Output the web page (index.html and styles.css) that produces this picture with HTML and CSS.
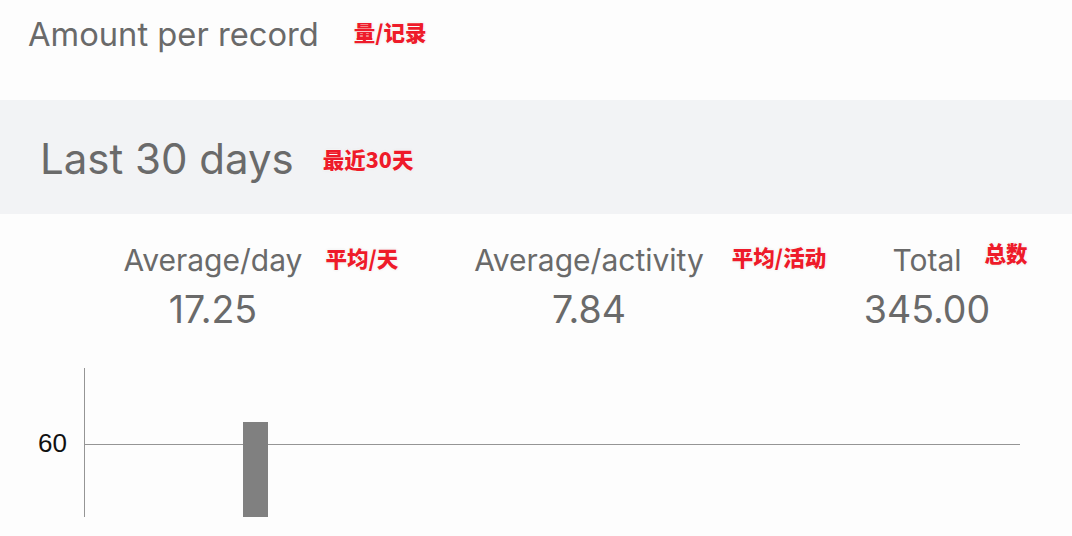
FILE: index.html
```html
<!DOCTYPE html>
<html lang="en">
<head>
<meta charset="utf-8">
<link rel="stylesheet" href="styles.css">
</head>
<body>
<div class="page">
  <section class="record-row">
    <span class="record-title">Amount per record</span>
    <span class="note note-record">量/记录</span>
  </section>

  <section class="period-band">
    <span class="period-title">Last 30 days</span>
    <span class="note note-period">最近30天</span>
  </section>

  <section class="stats">
    <div class="stat stat-day">
      <div class="stat-label"><span class="label-text">Average/day</span><span class="note note-stat">平均/天</span></div>
      <div class="stat-value">17.25</div>
    </div>
    <div class="stat stat-activity">
      <div class="stat-label"><span class="label-text">Average/activity</span><span class="note note-stat">平均/活动</span></div>
      <div class="stat-value">7.84</div>
    </div>
    <div class="stat stat-total">
      <div class="stat-label"><span class="label-text">Total</span><span class="note note-stat">总数</span></div>
      <div class="stat-value">345.00</div>
    </div>
  </section>

  <section class="chart">
    <div class="chart-area">
      <div class="y-axis"></div>
      <div class="gridline"></div>
      <div class="tick-label">60</div>
      <div class="bar" style="height: 95px;"></div>
    </div>
  </section>
</div>
</body>
</html>
```

FILE: styles.css
```css
* { box-sizing: border-box; }

html, body {
  margin: 0;
  padding: 0;
  background: #fdfdfd;
  overflow: hidden;
}

body {
  width: 1072px;
  height: 536px;
  font-family: "Inter", "Liberation Sans", sans-serif;
  color: #6a6a6a;
}

.page {
  display: flex;
  flex-direction: column;
}

.note {
  font-family: "Noto Sans CJK SC", sans-serif;
  font-weight: 900;
  font-size: 21.5px;
  line-height: 1;
  color: #ee1b2a;
  text-shadow: 0 0 2px #fff, 0 0 2px #fff, 0 0 3px #ddd;
  white-space: nowrap;
}

.record-row {
  height: 100px;
  padding: 14px 0 0 28px;
  display: flex;
  align-items: flex-start;
}

.record-title {
  font-size: 32.7px;
  line-height: 40px;
}

.note-record {
  margin: 7px 0 0 35px;
}

.period-band {
  height: 114px;
  background: #f2f3f5;
  padding: 4px 0 0 40px;
  display: flex;
  align-items: center;
}

.period-title {
  font-size: 42px;
  line-height: 50px;
}

.note-period {
  margin: 0 0 0 29px;
}

.stats {
  display: grid;
  grid-template-columns: 346px 406px 270px;
  padding: 28px 0 0 40px;
  height: 124px;
}

.stat {
  display: flex;
  flex-direction: column;
  align-items: center;
}

.stat-label {
  position: relative;
  font-size: 30px;
  line-height: 36px;
}

.note-stat {
  position: absolute;
  left: calc(100% + 23px);
  top: 5px;
}

.stat-activity .note-stat { left: calc(100% + 28px); top: 4px; }
.stat-total .note-stat { top: 0; }

.stat-value {
  margin-top: 10px;
  font-size: 37.5px;
  line-height: 44px;
}

.chart {
  padding: 0 52px 0 43px;
}

.chart-area {
  position: relative;
  height: 149px;
  margin-top: 30px;
}

.y-axis {
  position: absolute;
  left: 41px;
  top: 0;
  bottom: 0;
  width: 1px;
  background: #959595;
}

.gridline {
  position: absolute;
  left: 41px;
  right: 0;
  top: 76px;
  height: 1px;
  background: #959595;
}

.tick-label {
  position: absolute;
  left: -5px;
  top: 61px;
  font-family: "Liberation Sans", sans-serif;
  font-size: 26px;
  line-height: 28px;
  color: #111;
}

.bar {
  position: absolute;
  left: 200px;
  bottom: 0;
  width: 25px;
  background: #808080;
}
```
